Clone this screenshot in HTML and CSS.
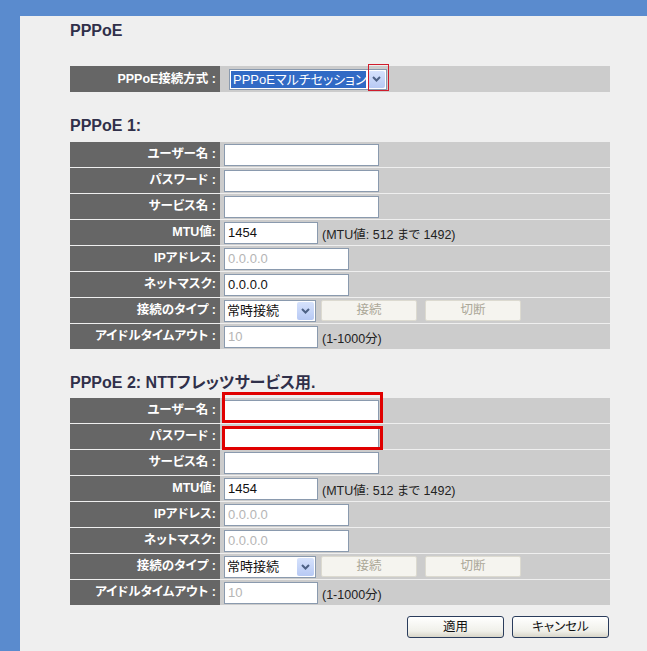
FILE: index.html
```html
<!DOCTYPE html>
<html lang="ja">
<head>
<meta charset="utf-8">
<title>PPPoE</title>
<link rel="stylesheet" href="styles.css">
</head>
<body>
<div class="panel">
  <div class="content">
    <h2 class="title">PPPoE</h2>

    <div class="mode-row">
      <div class="label">PPPoE接続方式 :</div>
      <div class="value mode-value">
        <div class="select mode-select">
          <span class="sel-text selected">PPPoEマルチセッション</span>
          <span class="arrow"><svg width="9" height="6" viewBox="0 0 9 6"><path d="M1 1 L4.5 4.5 L8 1" fill="none" stroke="#4d6185" stroke-width="2"/></svg></span>
          <span class="mark-thin"></span>
        </div>
      </div>
    </div>

    <h2 class="section">PPPoE 1:</h2>
    <div class="table">
      <div class="row"><div class="label">ユーザー名 :</div><div class="value"><div class="input w155"></div></div></div>
      <div class="row"><div class="label">パスワード :</div><div class="value"><div class="input w155"></div></div></div>
      <div class="row"><div class="label">サービス名 :</div><div class="value"><div class="input w155"></div></div></div>
      <div class="row"><div class="label">MTU値:</div><div class="value"><div class="input w94">1454</div><span class="note">(MTU値: 512 まで 1492)</span></div></div>
      <div class="row"><div class="label">IPアドレス:</div><div class="value"><div class="input w125 dis">0.0.0.0</div></div></div>
      <div class="row"><div class="label">ネットマスク:</div><div class="value"><div class="input w125">0.0.0.0</div></div></div>
      <div class="row"><div class="label">接続のタイプ :</div><div class="value">
        <div class="select type-select"><span class="sel-text">常時接続</span><span class="arrow"><svg width="9" height="6" viewBox="0 0 9 6"><path d="M1 1 L4.5 4.5 L8 1" fill="none" stroke="#4d6185" stroke-width="2"/></svg></span></div>
        <div class="btn-dis">接続</div><div class="btn-dis">切断</div>
      </div></div>
      <div class="row"><div class="label">アイドルタイムアウト :</div><div class="value"><div class="input w94 dis">10</div><span class="note">(1-1000分)</span></div></div>
    </div>

    <h2 class="section">PPPoE 2: NTTフレッツサービス用.</h2>
    <div class="table t2">
      <div class="row"><div class="label">ユーザー名 :</div><div class="value"><div class="input w155"></div><span class="mark mark1"></span></div></div>
      <div class="row"><div class="label">パスワード :</div><div class="value"><div class="input w155"></div><span class="mark mark2"></span></div></div>
      <div class="row"><div class="label">サービス名 :</div><div class="value"><div class="input w155"></div></div></div>
      <div class="row"><div class="label">MTU値:</div><div class="value"><div class="input w94">1454</div><span class="note">(MTU値: 512 まで 1492)</span></div></div>
      <div class="row"><div class="label">IPアドレス:</div><div class="value"><div class="input w125 dis">0.0.0.0</div></div></div>
      <div class="row"><div class="label">ネットマスク:</div><div class="value"><div class="input w125 dis">0.0.0.0</div></div></div>
      <div class="row"><div class="label">接続のタイプ :</div><div class="value">
        <div class="select type-select"><span class="sel-text">常時接続</span><span class="arrow"><svg width="9" height="6" viewBox="0 0 9 6"><path d="M1 1 L4.5 4.5 L8 1" fill="none" stroke="#4d6185" stroke-width="2"/></svg></span></div>
        <div class="btn-dis">接続</div><div class="btn-dis">切断</div>
      </div></div>
      <div class="row"><div class="label">アイドルタイムアウト :</div><div class="value"><div class="input w94 dis">10</div><span class="note">(1-1000分)</span></div></div>
    </div>

    <div class="actions">
      <div class="btn">適用</div>
      <div class="btn">キャンセル</div>
    </div>
  </div>
</div>
</body>
</html>
```
FILE: styles.css
```css
html, body {
  margin: 0;
  padding: 0;
  height: 100%;
}
body {
  background: #5a8bce;
  font-family: "Liberation Sans", "Noto Sans CJK JP", sans-serif;
  font-feature-settings: "palt";
  overflow: hidden;
}
.panel {
  margin: 16px 0 0 20px;
  background: #efefef;
  height: calc(100vh - 16px);
  box-sizing: border-box;
  padding: 5px 0 0 50px;
}
.content {
  width: 540px;
}
h2 {
  margin: 0;
  font-size: 16px;
  line-height: 20px;
  font-weight: bold;
  color: #30304a;
}
.mode-row {
  margin-top: 25px;
  display: flex;
  height: 26px;
}
.section {
  margin-top: 24px;
}
.table {
  margin-top: 6px;
}
.table.t2 {
  margin-top: 5px;
}
.row {
  display: flex;
  height: 25px;
  margin-bottom: 1px;
}
.label {
  width: 150px;
  flex: none;
  background: #666666;
  color: #ffffff;
  font-size: 12.5px;
  font-weight: bold;
  text-align: right;
  padding-right: 4px;
  box-sizing: border-box;
  line-height: 25px;
  white-space: nowrap;
}
.mode-row .label {
  line-height: 26px;
}
.value {
  flex: 1;
  background: #cccccc;
  display: flex;
  align-items: center;
  padding-left: 4px;
  position: relative;
}
.mode-value {
  padding-left: 9px;
}
.input {
  height: 22px;
  box-sizing: border-box;
  border: 1px solid #8a9aae;
  background: #ffffff;
  font-size: 13px;
  line-height: 20px;
  padding-left: 3px;
  color: #111;
}
.input.dis {
  color: #b5b5b5;
}
.w155 { width: 155px; }
.w94 { width: 94px; }
.w125 { width: 125px; }
.note {
  font-size: 12.5px;
  color: #222;
  margin-left: 4px;
  padding-top: 2px;
}
.select {
  display: flex;
  align-items: stretch;
  height: 22px;
  box-sizing: border-box;
  border: 1px solid #8a9aae;
  background: #ffffff;
  position: relative;
}
.mode-select {
  width: 158px;
  height: 21px;
}
.type-select {
  width: 92px;
}
.sel-text {
  flex: 1;
  font-size: 13px;
  line-height: 18px;
  padding: 1px 2px;
  color: #111;
  white-space: nowrap;
  overflow: hidden;
}
.sel-text.selected {
  background: #316ac5;
  color: #ffffff;
  margin: 1px 1px;
  padding: 0 2px;
  line-height: 17px;
}
.arrow {
  width: 17px;
  flex: none;
  margin: 1px;
  background: linear-gradient(#d6e2fc, #b7c9f4);
  border-radius: 2px;
  display: flex;
  align-items: center;
  justify-content: center;
}
.mark-thin {
  position: absolute;
  right: -3px;
  top: -6px;
  width: 21px;
  height: 27px;
  box-sizing: border-box;
  border: 1.5px solid #d01c2c;
}
.btn-dis {
  width: 96px;
  height: 21px;
  box-sizing: border-box;
  margin-left: 5px;
  background: #f5f4ef;
  border: 1px solid #dcdad0;
  border-radius: 2px;
  color: #aca899;
  font-size: 12.5px;
  line-height: 19px;
  text-align: center;
}
.btn-dis + .btn-dis {
  margin-left: 8px;
}
.mark {
  position: absolute;
  border: 3px solid #e00000;
  box-sizing: border-box;
}
.mark1 {
  left: 2px;
  top: -6px;
  width: 161px;
  height: 31px;
}
.mark2 {
  left: 2px;
  top: 2px;
  width: 161px;
  height: 24px;
}
.actions {
  margin-top: 11px;
  display: flex;
  justify-content: flex-end;
  gap: 8px;
  padding-right: 1px;
}
.btn {
  width: 97px;
  height: 22px;
  box-sizing: border-box;
  border: 1px solid #2a3c5c;
  border-radius: 3px;
  background: linear-gradient(#ffffff, #f0f0ea 70%, #d8d5c8);
  font-size: 12.5px;
  line-height: 20px;
  text-align: center;
  color: #111;
}
```
